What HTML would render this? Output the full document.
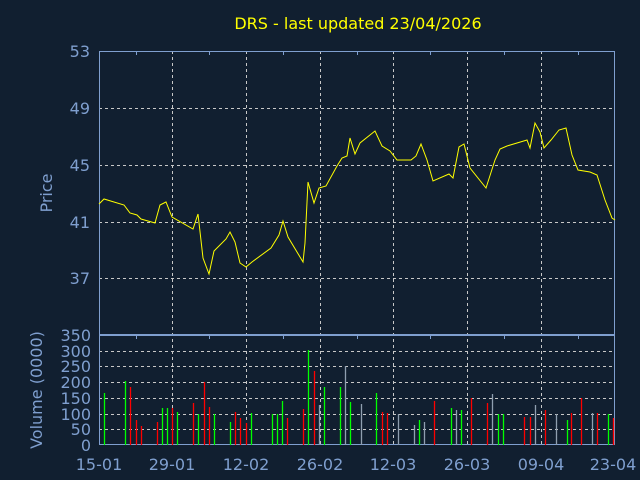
<!DOCTYPE html>
<html><head><meta charset="utf-8"><style>
html,body{margin:0;padding:0;background:#111f30;width:640px;height:480px;overflow:hidden}
svg{display:block}
text{font-family:"DejaVu Sans","Liberation Sans",sans-serif}
</style></head><body>
<svg width="640" height="480" xmlns="http://www.w3.org/2000/svg">
<rect width="640" height="480" fill="#111f30"/>
<text x="358" y="29" fill="#ffff00" font-size="16" text-anchor="middle">DRS - last updated 23/04/2026</text>
<g stroke="#c8c8c8" stroke-dasharray="3,3" stroke-width="1">
<line x1="99" y1="108.5" x2="615" y2="108.5"/><line x1="99" y1="165.5" x2="615" y2="165.5"/><line x1="99" y1="222.5" x2="615" y2="222.5"/><line x1="99" y1="278.5" x2="615" y2="278.5"/>
<line x1="99" y1="351.5" x2="615" y2="351.5"/><line x1="99" y1="366.5" x2="615" y2="366.5"/><line x1="99" y1="382.5" x2="615" y2="382.5"/><line x1="99" y1="398.5" x2="615" y2="398.5"/><line x1="99" y1="414.5" x2="615" y2="414.5"/><line x1="99" y1="429.5" x2="615" y2="429.5"/>
<line x1="172.5" y1="51" x2="172.5" y2="445"/><line x1="246.5" y1="51" x2="246.5" y2="445"/><line x1="320.5" y1="51" x2="320.5" y2="445"/><line x1="393.5" y1="51" x2="393.5" y2="445"/><line x1="467.5" y1="51" x2="467.5" y2="445"/><line x1="541.5" y1="51" x2="541.5" y2="445"/>
</g>
<g stroke="#7f9fcf" stroke-width="1" fill="none">
<rect x="99.5" y="51.5" width="515" height="283"/>
<rect x="99.5" y="335.5" width="515" height="109"/>
<path d="M136.5 51v4M209.5 51v4M283.5 51v4M357.5 51v4M430.5 51v4M504.5 51v4M578.5 51v4M136.5 335v4M209.5 335v4M283.5 335v4M357.5 335v4M430.5 335v4M504.5 335v4M578.5 335v4"/>
</g>
<polyline fill="none" stroke="#ffff00" stroke-width="1" points="99,204 104,199 124,205 130,213 137,215 141,219 155,223 160,205 166,202 172,217 193,229 198,214 203,258 209,274 214,251 226,239 230,232 235,242 240,263 246,267 252,262 271,248 279,235 283,221 288,237 303,262 305,243 308,182 314,203 319,188 326,186 337,166 342,158 347,156 350,138 355,154 360,143 375,131 382,146 390,151 397,160 411,160 416,156 421,144 427,160 433,181 449,174 453,178 459,147 464,144 470,168 486,188 495,160 500,149 507,146 527,140 530,148 535,123 540,132 544,148 551,140 559,130 566,128 572,155 578,170 590,172 597,175 605,200 612,218 615,220"/>
<g stroke-width="1.3">
<g stroke="#00ff00">
<path d="M104.5 445V393M125.5 445V381M162.5 445V408M167.5 445V408M177.5 445V412M198.5 445V414M214.5 445V414M230.5 445V422M251.5 445V413M272.5 445V414M277.5 445V414M282.5 445V401M308.5 445V350M324.5 445V387M340.5 445V387M350.5 445V402M376.5 445V393M419.5 445V420M451.5 445V408M461.5 445V410M498.5 445V414M503.5 445V414M567.5 445V420M608.5 445V414"/>
</g>
<g stroke="#ff0000">
<path d="M130.5 445V387M136.5 445V420M141.5 445V426M157.5 445V422M172.5 445V408M193.5 445V403M204.5 445V382M209.5 445V407M235.5 445V412M240.5 445V418M246.5 445V423M287.5 445V418M303.5 445V409M314.5 445V371M382.5 445V412M387.5 445V413M434.5 445V401M471.5 445V398M487.5 445V403M524.5 445V417M530.5 445V417M545.5 445V410M571.5 445V413M581.5 445V398M597.5 445V413M613.5 445V418"/>
</g>
<g stroke="#8f9fb0">
<path d="M319.5 445V405M345.5 445V366M361.5 445V404M398.5 445V414M414.5 445V425M424.5 445V422M456.5 445V410M492.5 445V394M535.5 445V405M556.5 445V414M592.5 445V413"/>
</g>
</g>
<g fill="#7f9fcf" font-size="16" text-anchor="end">
<text x="90" y="57">53</text><text x="90" y="114">49</text><text x="90" y="171">45</text><text x="90" y="228">41</text><text x="90" y="284">37</text>
<text x="91" y="341">350</text><text x="91" y="357">300</text><text x="91" y="372">250</text><text x="91" y="388">200</text><text x="91" y="404">150</text><text x="91" y="420">100</text><text x="91" y="435">50</text><text x="91" y="451">0</text>
</g>
<g fill="#7f9fcf" font-size="16" text-anchor="middle">
<text x="99" y="470">15-01</text><text x="172" y="470">29-01</text><text x="246" y="470">12-02</text><text x="320" y="470">26-02</text><text x="393" y="470">12-03</text><text x="467" y="470">26-03</text><text x="541" y="470">09-04</text><text x="613" y="470">23-04</text>
</g>
<text transform="translate(52,193) rotate(-90)" fill="#7f9fcf" font-size="16" text-anchor="middle">Price</text>
<text transform="translate(42,390) rotate(-90)" fill="#7f9fcf" font-size="16" text-anchor="middle">Volume (0000)</text>
</svg>
</body></html>
